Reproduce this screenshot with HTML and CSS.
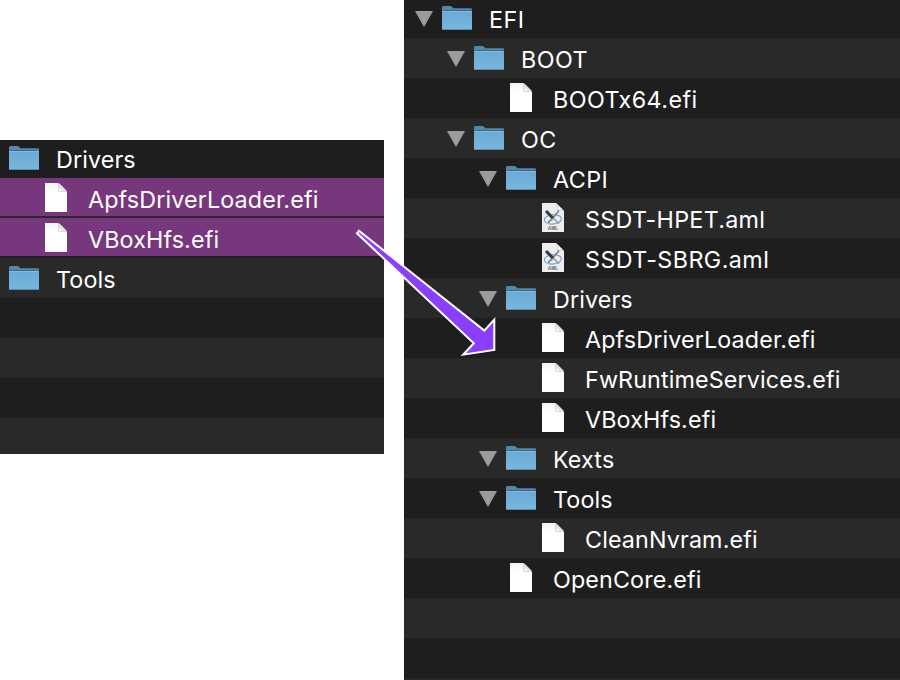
FILE: index.html
```html
<!DOCTYPE html>
<html lang="en">
<head>
<meta charset="utf-8">
<title>EFI folder</title>
<link rel="stylesheet" href="styles.css">
</head>
<body>
<svg class="defs" width="0" height="0">
  <defs>
    <linearGradient id="front" x1="0" y1="0" x2="0" y2="1">
      <stop offset="0" stop-color="#67aad7"/><stop offset="1" stop-color="#7cb7da"/>
    </linearGradient>
    <linearGradient id="paper" x1="0" y1="0" x2="0" y2="1">
      <stop offset="0" stop-color="#f3f3f3"/><stop offset=".3" stop-color="#fff"/>
    </linearGradient>
    <linearGradient id="fold" x1="0" y1="1" x2="1" y2="0">
      <stop offset="0" stop-color="#fff"/><stop offset=".5" stop-color="#d8d8d8"/>
    </linearGradient>
    <symbol id="folder" viewBox="0 0 30 24">
      <path d="M0 23V1.6Q0 0 1.5 0H8.3Q9.3 0 10 .8L11.5 2.2H28.7Q30 2.2 30 3.4V23Z" fill="#5587a8"/>
      <path d="M0 4H30V5H0Z" fill="#41677f"/>
      <path d="M0 5H30V22.8Q30 24 28.8 24H1.2Q0 24 0 22.8Z" fill="url(#front)"/>
      <path d="M0 5H30V6H0Z" fill="#80bde3"/>
      <path d="M.3 23H29.7Q29.4 24 28.8 24H1.2Q.6 24 .3 23Z" fill="#548caf"/>
    </symbol>
    <symbol id="file" viewBox="0 0 22 29">
      <path d="M0 0H12Q14 0 15.5 1.4L20.7 6.7Q22 8 22 10V29H0Z" fill="url(#paper)"/>
      <path d="M13.5 1V8.3H21" fill="none" stroke="#d4d4d4"/>
      <path d="M14 .8L21.3 8H14Z" fill="url(#fold)"/>
    </symbol>
    <symbol id="aml" viewBox="0 0 22 29">
      <path d="M0 0H14L22 8V29H0Z" fill="#ededed"/>
      <path d="M14 0L22 8Q18 6 15.5 7.5Q16 3 14 0Z" fill="#fff"/>
      <path d="M14.5 .5Q16.5 4 15.5 7.5Q19 6.3 22 8" fill="none" stroke="#b5b5b5" stroke-width=".7"/>
      <ellipse cx="10.8" cy="16.3" rx="8.6" ry="4.6" fill="none" stroke="#5b9be0" stroke-width="1" transform="rotate(-5 11 16)"/>
      <path d="M5 20.5Q10 22.5 14 20.5" fill="none" stroke="#8ab6e6" stroke-width=".8"/>
      <path d="M10.5 14.5L17 20.5" stroke="#8d8f91" stroke-width="1.3"/>
      <path d="M6 19.5L10 16L17 7.5" fill="none" stroke="#85888c" stroke-width="1.8"/>
      <path d="M4 8L10.8 15" stroke="#3d3d3f" stroke-width="3.2"/>
      <text x="11" y="27.3" class="badge" text-anchor="middle">AML</text>
    </symbol>
    <symbol id="open" viewBox="0 0 18 16"><path d="M0 0H18L9 16Z" fill="#9c9c9c"/></symbol>
  </defs>
</svg>
<main class="canvas">
  <section class="panel source">
    <div class="row"><svg class="icon"><use href="#folder"/></svg><span class="name">Drivers</span></div>
    <div class="row picked d1"><svg class="icon doc"><use href="#file"/></svg><span class="name">ApfsDriverLoader.efi</span></div>
    <div class="row picked d1"><svg class="icon doc"><use href="#file"/></svg><span class="name">VBoxHfs.efi</span></div>
    <div class="row"><svg class="icon"><use href="#folder"/></svg><span class="name">Tools</span></div>
    <div class="row"></div>
    <div class="row"></div>
    <div class="row"></div>
    <div class="row"></div>
  </section>
  <section class="panel tree">
    <div class="row"><svg class="arrow"><use href="#open"/></svg><svg class="icon"><use href="#folder"/></svg><span class="name caps">EFI</span></div>
    <div class="row d1"><svg class="arrow"><use href="#open"/></svg><svg class="icon"><use href="#folder"/></svg><span class="name caps">BOOT</span></div>
    <div class="row d2"><span class="arrow"></span><svg class="icon doc"><use href="#file"/></svg><span class="name caps">BOOTx64.efi</span></div>
    <div class="row d1"><svg class="arrow"><use href="#open"/></svg><svg class="icon"><use href="#folder"/></svg><span class="name caps">OC</span></div>
    <div class="row d2"><svg class="arrow"><use href="#open"/></svg><svg class="icon"><use href="#folder"/></svg><span class="name caps">ACPI</span></div>
    <div class="row d3"><span class="arrow"></span><svg class="icon doc"><use href="#aml"/></svg><span class="name mixed">SSDT-HPET.aml</span></div>
    <div class="row d3"><span class="arrow"></span><svg class="icon doc"><use href="#aml"/></svg><span class="name caps">SSDT-SBRG.aml</span></div>
    <div class="row d2"><svg class="arrow"><use href="#open"/></svg><svg class="icon"><use href="#folder"/></svg><span class="name">Drivers</span></div>
    <div class="row d3"><span class="arrow"></span><svg class="icon doc"><use href="#file"/></svg><span class="name">ApfsDriverLoader.efi</span></div>
    <div class="row d3"><span class="arrow"></span><svg class="icon doc"><use href="#file"/></svg><span class="name">FwRuntimeServices.efi</span></div>
    <div class="row d3"><span class="arrow"></span><svg class="icon doc"><use href="#file"/></svg><span class="name">VBoxHfs.efi</span></div>
    <div class="row d2"><svg class="arrow"><use href="#open"/></svg><svg class="icon"><use href="#folder"/></svg><span class="name">Kexts</span></div>
    <div class="row d2"><svg class="arrow"><use href="#open"/></svg><svg class="icon"><use href="#folder"/></svg><span class="name">Tools</span></div>
    <div class="row d3"><span class="arrow"></span><svg class="icon doc"><use href="#file"/></svg><span class="name">CleanNvram.efi</span></div>
    <div class="row d2"><span class="arrow"></span><svg class="icon doc"><use href="#file"/></svg><span class="name">OpenCore.efi</span></div>
    <div class="row"></div>
    <div class="row"></div>
    <div class="row"></div>
  </section>
  <svg class="pointer" viewBox="350 220 150 140">
    <path d="M359 230.8L484.3 330.6L494.3 319.5V350L463.2 354.7L473.8 343.3L357 233.3Z" fill="#8a3ffc" stroke="#fff" stroke-width="2"/>
  </svg>
</main>
</body>
</html>
```
FILE: styles.css
```css
* { box-sizing: border-box; }

body {
  margin: 0;
  background: #fff;
  font-family: Inter, "Liberation Sans", sans-serif;
}

.defs { display: block; }

.canvas {
  position: relative;
  display: flex;
  align-items: flex-start;
  gap: 20px;
  width: 900px;
  height: 680px;
  overflow: hidden;
}

.panel {
  display: flex;
  flex-direction: column;
  overflow: hidden;
}

.source {
  width: 384px;
  height: 314px;
  margin-top: 140px;
}

.tree {
  width: 496px;
  height: 680px;
}

.row {
  --depth: 0;
  --start: 11px;
  display: flex;
  flex: none;
  align-items: flex-start;
  height: 40px;
  padding-left: calc(var(--start) + var(--depth) * 32px);
  background: #1e1e1e;
}

.row:nth-child(even) { background: #292929; }
.row:first-child { margin-top: -2px; }
.source .row { --start: 9px; }
.row.d1 { --depth: 1; }
.row.d2 { --depth: 2; }
.row.d3 { --depth: 3; }

.source .picked { background: linear-gradient(#77377c 38px, #292929 38px); }
.source .picked:nth-child(odd) { background: linear-gradient(#77377c 38px, #1e1e1e 38px); }

.arrow {
  flex: none;
  width: 18px;
  height: 16px;
  margin: 13px 9px 0 0;
}

.icon {
  flex: none;
  width: 30px;
  height: 24px;
  margin: 8px 17px 0 0;
  overflow: visible;
}

.doc {
  width: 22px;
  height: 29px;
  margin: 5px 21px 0 4px;
}

.name {
  color: #fff;
  font-size: 23.3px;
  font-weight: 380;
  line-height: 40px;
  letter-spacing: 0.13px;
  white-space: nowrap;
  padding-top: 2px;
}

.mixed { letter-spacing: 0.3px; }
.caps { letter-spacing: 0.45px; }

.badge {
  fill: #666;
  font: 700 4.8px "Liberation Sans", sans-serif;
}

.pointer {
  position: absolute;
  left: 350px;
  top: 220px;
  width: 150px;
  height: 140px;
}
```
